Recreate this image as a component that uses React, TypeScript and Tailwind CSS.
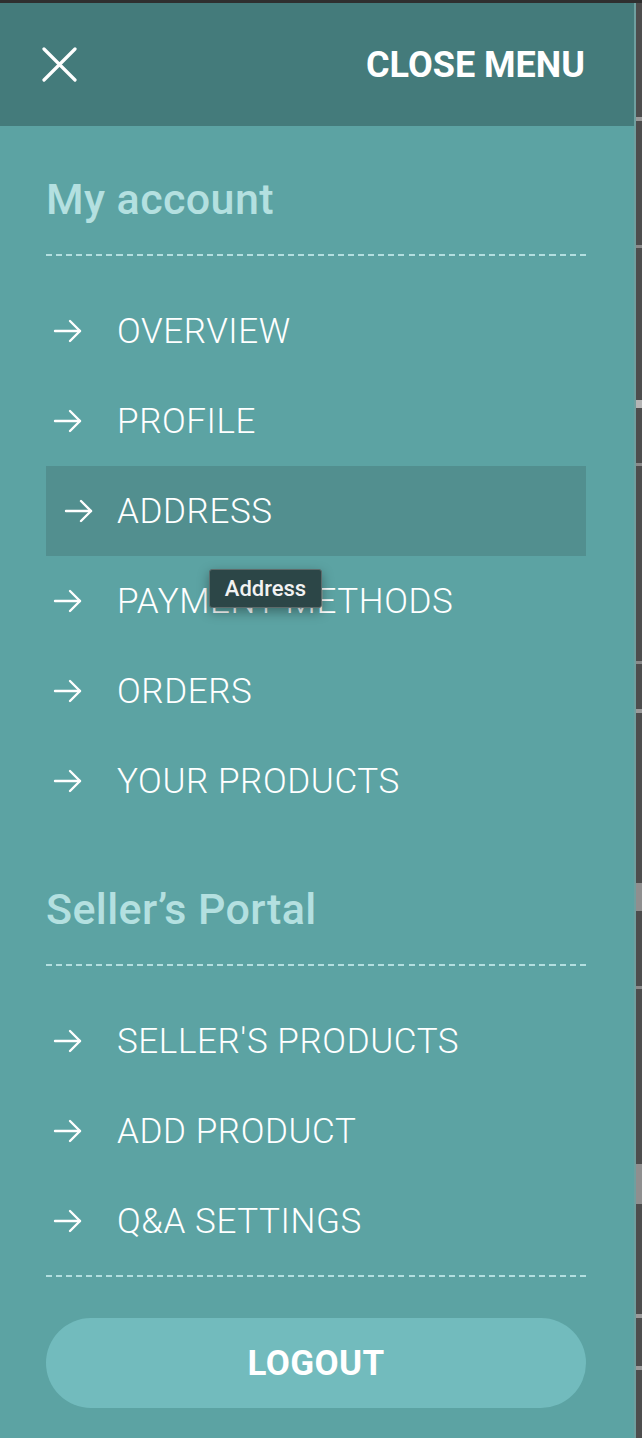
import React from "react";

const ACCOUNT_LINKS = ["OVERVIEW", "PROFILE", "ADDRESS", "PAYMENT METHODS", "ORDERS", "YOUR PRODUCTS"];
const SELLER_LINKS = ["SELLER'S PRODUCTS", "ADD PRODUCT", "Q&A SETTINGS"];

function Arrow() {
  return (
    <svg width="30" height="24" viewBox="0 0 30 24" fill="none" stroke="white" strokeWidth="2.4" strokeLinecap="round" strokeLinejoin="round">
      <path d="M2 12h25" />
      <path d="M17 2l10 10-10 10" />
    </svg>
  );
}

function Dashed() {
  return <div className="h-[2px] w-full bg-[repeating-linear-gradient(to_right,#b3dfe0_0_6.04px,transparent_6.04px_10.07px)]" />;
}

function MenuRow({ label, active }: { label: string; active?: boolean }) {
  return (
    <div className={`relative flex h-[90px] items-center ${active ? "bg-[#528f8f]" : ""}`}>
      <span className={`flex w-[71px] shrink-0 ${active ? "pl-[18px]" : "pl-[7px]"}`}>
        <Arrow />
      </span>
      <span className="text-[35px] font-light leading-none tracking-[0.6px] text-white">{label}</span>
      {active && (
        <div className="absolute left-[163px] top-[103px] z-10 flex h-[39px] w-[113px] items-center justify-center rounded-[3px] border border-[#5d6b6b] bg-[#2c4647] text-[22px] font-medium text-[#f2f2f2] shadow-[0_4px_12px_rgba(0,0,0,0.35)]">
          Address
        </div>
      )}
    </div>
  );
}

export default function App() {
  return (
    <div className="w-[642px] h-[1438px] overflow-hidden bg-[#4b4b4b] font-['Roboto',sans-serif]">
      <div className="h-[3px] bg-[#2f2f2f]" />
      <div className="flex h-[1435px]">
        {/* menu panel */}
        <div className="w-[634px] bg-[#5ca3a3]">
          <div className="flex h-[123px] items-center justify-between bg-[#447b7b] pl-[42px] pr-[49px]">
            <svg width="35" height="35" viewBox="0 0 35 35" stroke="white" strokeWidth="3.2" strokeLinecap="round">
              <path d="M2 2l31 31M33 2L2 33" />
            </svg>
            <span className="text-[36px] font-bold leading-none text-white">CLOSE MENU</span>
          </div>

          <div className="pl-[46px] pr-[48px]">
            <h2 className="mt-[48px] h-[50px] text-[43px] font-medium leading-[50px] tracking-[0.4px] text-[#b4e0e0]">My account</h2>
            <div className="mt-[30px]">
              <Dashed />
            </div>
            <nav className="mt-[30px]">
              {ACCOUNT_LINKS.map((l) => (
                <MenuRow key={l} label={l} active={l === "ADDRESS"} />
              ))}
            </nav>

            <h2 className="mt-[58px] h-[50px] text-[43px] font-medium leading-[50px] tracking-[0.4px] text-[#b4e0e0]">Seller’s Portal</h2>
            <div className="mt-[30px]">
              <Dashed />
            </div>
            <nav className="mt-[30px]">
              {SELLER_LINKS.map((l) => (
                <MenuRow key={l} label={l} />
              ))}
            </nav>
            <div className="mt-[9px]">
              <Dashed />
            </div>

            <button className="mt-[41px] flex h-[90px] w-full items-center justify-center rounded-full bg-[#72bbbd] text-[35px] font-bold leading-none tracking-[0.4px] text-white">
              LOGOUT
            </button>
          </div>
        </div>

        {/* page peeking from behind */}
        <div className="w-[2px] bg-[#6f9f9f]" />
        <div className="flex flex-1 flex-col bg-[#4d4d4d]">
          <div className="mt-[114px] h-[4px] bg-[#9a9a9a]" />
          <div className="mt-[124px] h-[3px] bg-[#8a8a8a]" />
          <div className="mt-[152px] h-[8px] bg-[#b5b5b5]" />
          <div className="mt-[55px] h-[3px] bg-[#8a8a8a]" />
          <div className="mt-[195px] h-[3px] bg-[#8a8a8a]" />
          <div className="mt-[45px] h-[4px] bg-[#9a9a9a]" />
          <div className="mt-[170px] h-[28px] bg-[#8f8f8f]" />
          <div className="mt-[75px] h-[3px] bg-[#8a8a8a]" />
          <div className="mt-[175px] h-[40px] bg-[#8f8f8f]" />
          <div className="mt-[110px] h-[4px] bg-[#9a9a9a]" />
          <div className="mt-[48px] h-[4px] bg-[#9a9a9a]" />
        </div>
      </div>
    </div>
  );
}
